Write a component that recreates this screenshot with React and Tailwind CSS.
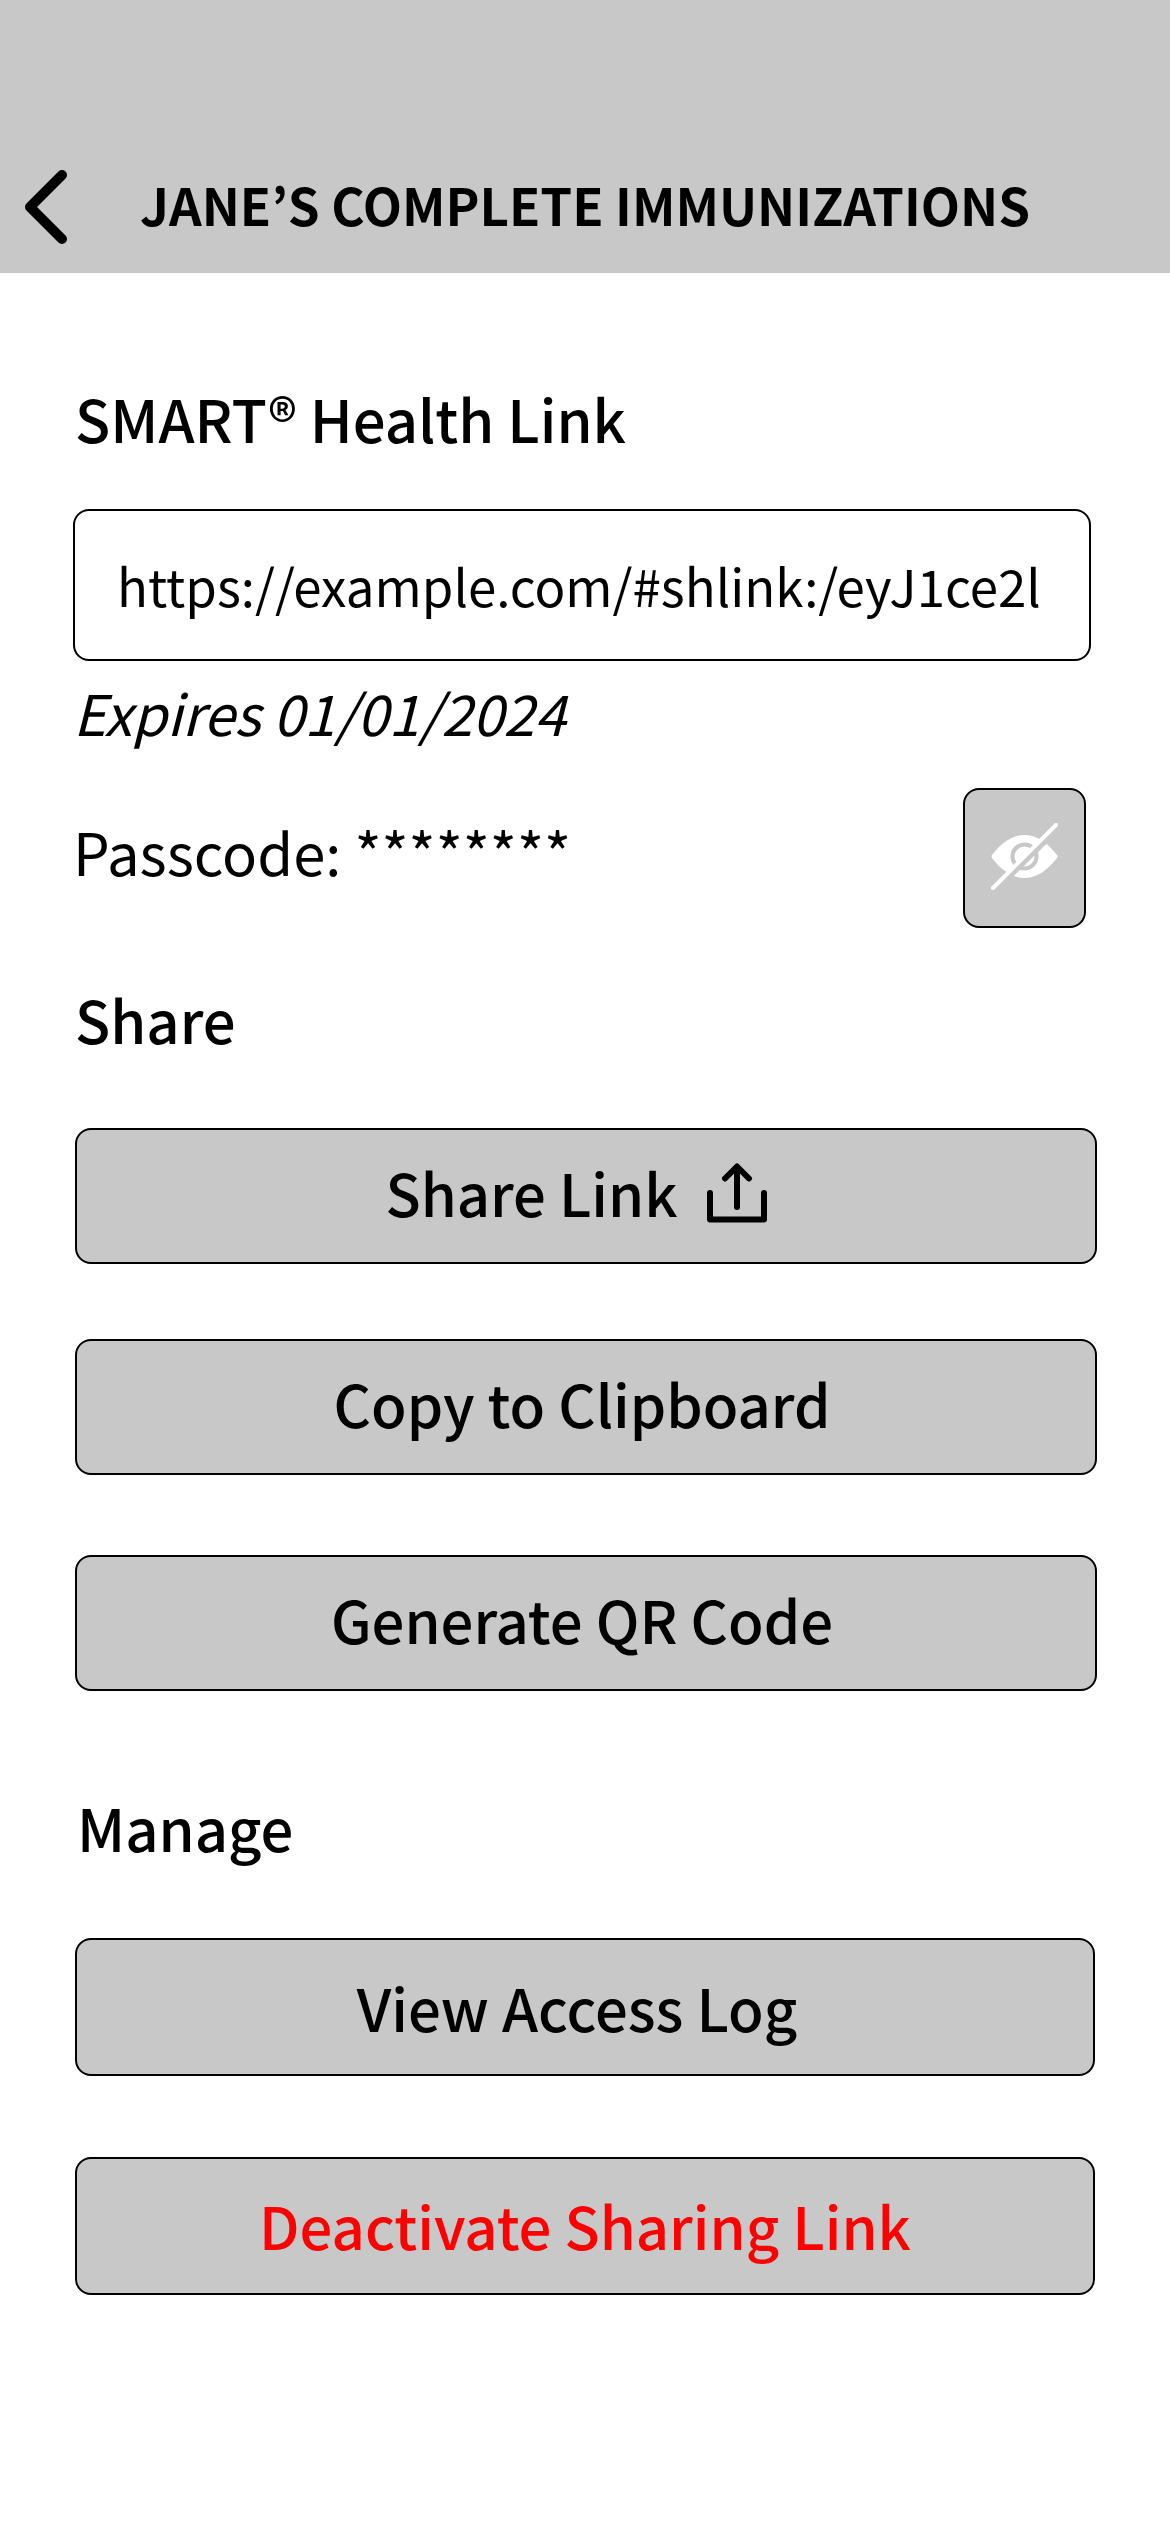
import React from "react";

const button =
  "flex w-full items-center justify-center rounded-2xl border-2 border-black bg-[#c8c8c8] font-medium";

function BackIcon() {
  return (
    <svg viewBox="0 0 44 74" className="h-[74px] w-11" fill="none" stroke="#000" strokeWidth="10" strokeLinecap="round" strokeLinejoin="round" aria-hidden="true">
      <path d="M38 5 L6 37 L38 69" />
    </svg>
  );
}

function ShareIcon() {
  return (
    <svg viewBox="0 0 60 60" className="h-[60px] w-[60px]" fill="none" stroke="#000" strokeWidth="6" strokeLinecap="round" strokeLinejoin="round" aria-hidden="true">
      <path d="M3 30V56.500H57V30M30 44V4M18 15.500L30 3.500L42 15.500" />
    </svg>
  );
}

function EyeOffIcon() {
  return (
    <svg viewBox="0 0 67 67" className="h-[67px] w-[67px]" fill="none" aria-hidden="true">
      <path d="M1 32C11 19 22 12 33.5 12S56 19 66 32Q67 33.5 66 35C56 48 45 55 33.5 55S11 48 1 35Q0 33.5 1 32Z" fill="#fff" />
      <circle cx="33.5" cy="33.5" r="12" stroke="#c8c8c8" strokeWidth="4" />
      <path d="M4 68L68 5" stroke="#c8c8c8" strokeWidth="5" />
      <path d="M2 65L65 2" stroke="#fff" strokeWidth="4" strokeLinecap="round" />
    </svg>
  );
}

export default function App() {
  return (
    <div className="min-h-screen bg-white font-['Noto_Sans_CJK_KR',sans-serif] text-[58px] leading-[80px] text-black">
      <header className="flex h-[273px] items-end gap-[72px] bg-[#c8c8c8] pb-[29px] pl-6">
        <button type="button" aria-label="Back"><BackIcon /></button>
        <h1 className="text-[51px] font-bold">JANE’S COMPLETE IMMUNIZATIONS</h1>
      </header>
      <main className="pt-[105px]">
        <section className="pl-[73px] pr-[79px]">
          <h2 className="pl-0.5 font-medium"><label htmlFor="health-link">SMART® Health Link</label></h2>
          <input id="health-link" readOnly defaultValue="https://example.com/#shlink:/eyJ1ce2l" className="mt-[51px] block h-[152px] w-full rounded-2xl border-2 border-black pl-[42px] pr-8 text-[51px]" />
          <p className="mt-[11px] text-[56px] italic">Expires 01/01/2024</p>
          <div className="mt-9 flex items-center justify-between pr-[5px]">
            <p className="pb-3.5">Passcode: ********</p>
            <button type="button" aria-label="Show passcode" className="flex h-[140px] w-[123px] items-center justify-center rounded-2xl border-2 border-black bg-[#c8c8c8] pb-1"><EyeOffIcon /></button>
          </div>
        </section>
        <section className="mt-[51px] pl-[75px] pr-[73px]">
          <h2 className="font-medium">Share</h2>
          <button type="button" className={`${button} mt-[69px] h-[136px] gap-[29px] pb-2 pr-5`}>Share Link <span className="pt-0.5"><ShareIcon /></span></button>
          <button type="button" className={`${button} mt-[75px] h-[136px] pb-2 pr-2`}>Copy to Clipboard</button>
          <button type="button" className={`${button} mt-20 h-[136px] pb-2 pr-2`}>Generate QR Code</button>
        </section>
        <section className="mt-24 pl-[75px] pr-[75px]">
          <h2 className="pl-0.5 font-medium">Manage</h2>
          <button type="button" className={`${button} mt-[71px] h-[138px] pr-4`}>View Access Log</button>
          <button type="button" className={`${button} mt-[81px] h-[138px] pb-0.5 text-[#ff0000]`}>Deactivate Sharing Link</button>
        </section>
      </main>
    </div>
  );
}
